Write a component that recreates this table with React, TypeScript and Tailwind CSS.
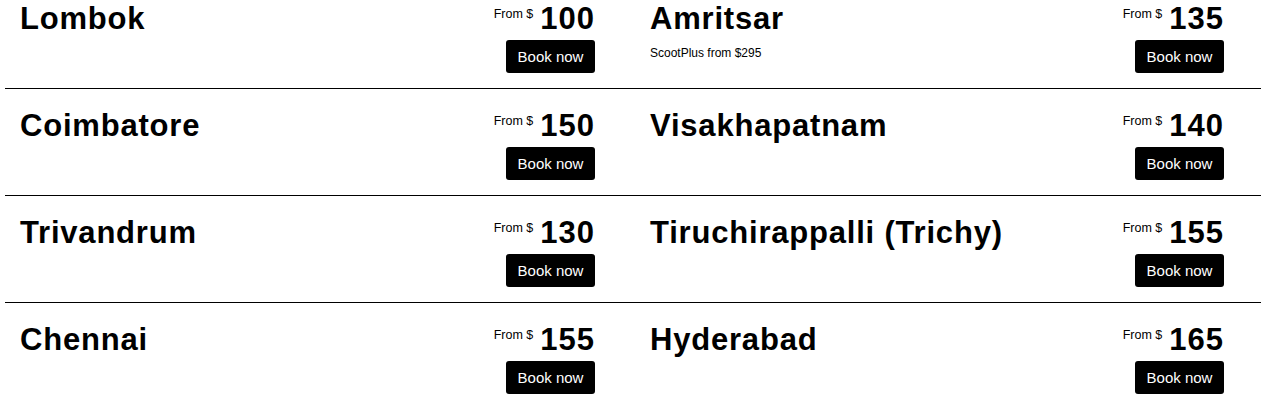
import React from 'react';

type Fare = {
  city: string;
  price: number;
  note?: string;
};

const FARES: Fare[] = [
  { city: 'Lombok', price: 100 },
  { city: 'Amritsar', price: 135, note: 'ScootPlus from $295' },
  { city: 'Coimbatore', price: 150 },
  { city: 'Visakhapatnam', price: 140 },
  { city: 'Trivandrum', price: 130 },
  { city: 'Tiruchirappalli (Trichy)', price: 155 },
  { city: 'Chennai', price: 155 },
  { city: 'Hyderabad', price: 165 },
];

const FareCell: React.FC<{ fare: Fare; last: boolean; right: boolean }> = ({ fare, last, right }) => (
  <div
    className={
      'flex justify-between pt-[19px] h-[107px] ' +
      (right ? 'pl-[17px] pr-[37px] ' : 'pl-[15px] pr-[38px] ') +
      (last ? '' : 'border-b border-black')
    }
  >
    {/* City name + optional note */}
    <div className="flex flex-col">
      <h3 className="text-[31px] leading-[36px] font-bold tracking-[0.8px] text-black">{fare.city}</h3>
      {fare.note && (
        <p className="mt-[8px] text-[12px] leading-[16px] text-black">{fare.note}</p>
      )}
    </div>

    {/* Price + CTA */}
    <div className="flex flex-col items-end">
      <div className="flex items-start">
        <span className="mt-[7px] text-[12.5px] leading-[12px] text-black">From $</span>
        <span className="ml-[7px] text-[31px] leading-[36px] font-bold tracking-[1px] text-black">
          {fare.price}
        </span>
      </div>
      <button className="mt-[3px] w-[89px] h-[33px] rounded-[3px] bg-black text-white text-[15px] leading-none">
        Book now
      </button>
    </div>
  </div>
);

export default function App() {
  return (
    <div className="w-[1261px] h-[405px] overflow-hidden bg-white font-['Liberation_Sans',Arial,sans-serif]">
      <div className="-mt-[18px] pl-[5px] grid grid-cols-2">
        {FARES.map((fare, i) => (
          <FareCell key={fare.city} fare={fare} right={i % 2 === 1} last={i >= FARES.length - 2} />
        ))}
      </div>
    </div>
  );
}
